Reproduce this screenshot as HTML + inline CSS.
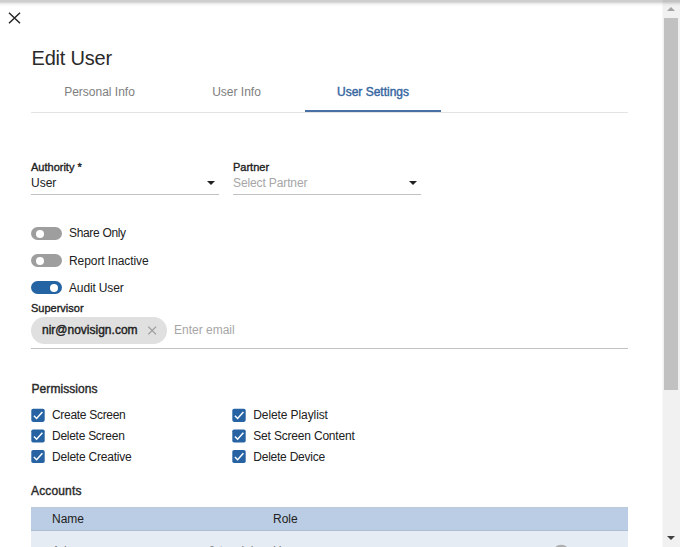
<!DOCTYPE html>
<html><head><meta charset="utf-8">
<style>
html,body{margin:0;padding:0;}
body{width:680px;height:547px;overflow:hidden;background:#fff;position:relative;font-family:"Liberation Sans",sans-serif;color:#212121;}
.abs{position:absolute;}
.topshadow{left:0;top:0;width:680px;height:7px;background:linear-gradient(to bottom,rgba(0,0,0,0.19) 0,rgba(0,0,0,0.195) 1.6px,rgba(0,0,0,0.11) 3px,rgba(0,0,0,0.04) 4.5px,rgba(0,0,0,0) 6.5px);}
.sb{left:662px;top:0;width:18px;height:547px;background:linear-gradient(to right,#f8f8f8 0,#f8f8f8 1px,#f1f1f1 1px);}
.thumb{left:664px;top:18px;width:14px;height:371.6px;background:#c1c1c1;}
h1{margin:0;font-weight:400;font-size:20px;left:31.5px;top:46px;line-height:24px;color:#2a2a2a;letter-spacing:-0.2px;}
.tab{top:84px;height:16px;line-height:16px;font-size:12px;color:#7e7e7e;text-align:center;}
.lbl{font-size:11px;color:#212121;line-height:12px;-webkit-text-stroke:0.35px #212121;}
.val{font-size:12px;line-height:14px;color:#212121;}
.ph{color:#a6a6a6;}
.line{height:1px;background:#c2c2c2;}
.tog{width:31px;height:13px;border-radius:7px;background:#9e9e9e;}
.tog i{position:absolute;top:2.5px;left:4.5px;width:8px;height:8px;border-radius:50%;background:#fff;}
.tog.on{background:#2464a3;}
.tog.on i{left:19px;}
.tl{font-size:12px;line-height:14px;color:#212121;}
.cb{width:13px;height:13px;border-radius:2px;background:#2464a3;}
.sec{font-size:12px;line-height:14px;color:#2a2a2a;-webkit-text-stroke:0.4px #2a2a2a;}
</style></head><body>
<svg class="abs" style="left:8px;top:12px" width="13" height="12" viewBox="0 0 13 12"><path d="M1 0.8 L12 11.2 M12 0.8 L1 11.2" stroke="#262626" stroke-width="1.5" fill="none"/></svg>
<h1 class="abs">Edit User</h1>

<div class="abs tab" style="left:31px;width:137px;">Personal Info</div>
<div class="abs tab" style="left:168px;width:137px;">User Info</div>
<div class="abs tab" style="left:305px;width:136px;color:#35669f;font-size:12px;-webkit-text-stroke:0.4px #35669f">User Settings</div>
<div class="abs" style="left:31px;top:112px;width:597px;height:1px;background:#e4e4e4"></div>
<div class="abs" style="left:305px;top:110px;width:136px;height:2px;background:#4a6fa5"></div>

<div class="abs lbl" style="left:31px;top:161px">Authority *</div>
<div class="abs val" style="left:31px;top:176px">User</div>
<div class="abs" style="left:207px;top:180.5px;width:0;height:0;border-left:4px solid transparent;border-right:4px solid transparent;border-top:4px solid #212121"></div>
<div class="abs line" style="left:31px;top:194px;width:188px"></div>

<div class="abs lbl" style="left:233px;top:161px">Partner</div>
<div class="abs val ph" style="left:233px;top:176px;letter-spacing:-0.12px">Select Partner</div>
<div class="abs" style="left:408.5px;top:180.5px;width:0;height:0;border-left:4px solid transparent;border-right:4px solid transparent;border-top:4px solid #212121"></div>
<div class="abs line" style="left:233px;top:194px;width:188px"></div>

<div class="abs tog" style="left:31px;top:227px"><i></i></div>
<div class="abs tl" style="left:69px;top:226px;letter-spacing:-0.33px">Share Only</div>
<div class="abs tog" style="left:31px;top:254px"><i></i></div>
<div class="abs tl" style="left:69px;top:254px;letter-spacing:-0.07px">Report Inactive</div>
<div class="abs tog on" style="left:31px;top:281px"><i></i></div>
<div class="abs tl" style="left:69px;top:281px;letter-spacing:-0.15px">Audit User</div>

<div class="abs lbl" style="left:31px;top:302px">Supervisor</div>
<div class="abs" style="left:31px;top:317px;width:136px;height:27px;border-radius:14px;background:#e0e0e0"></div>
<div class="abs" style="left:42px;top:323px;font-size:12px;line-height:14px;color:#212121;-webkit-text-stroke:0.4px #212121">nir@novisign.com</div>
<svg class="abs" style="left:147px;top:326px" width="10" height="10" viewBox="0 0 10 10"><path d="M1.3 0.6 L9 8.3 M9 0.6 L1.3 8.3" stroke="#999" stroke-width="1.2" fill="none"/></svg>
<div class="abs val ph" style="left:174px;top:323px">Enter email</div>
<div class="abs line" style="left:31px;top:348px;width:597px"></div>

<div class="abs sec" style="left:31.5px;top:382px;letter-spacing:0.07px">Permissions</div>
<svg class="abs" style="left:31px;top:408px" width="15" height="15" viewBox="0 0 15 15"><rect x="0.3" y="0.7" width="13.4" height="13.2" rx="1.8" fill="#2763a3"/><path d="M2.9 7.7 L5.6 10.5 L11.4 4.0" stroke="#fff" stroke-width="1.5" fill="none"/></svg>
<div class="abs tl" style="left:52px;top:408px;letter-spacing:-0.3px">Create Screen</div>
<svg class="abs" style="left:31px;top:429px" width="15" height="15" viewBox="0 0 15 15"><rect x="0.3" y="0.4" width="13.4" height="13.2" rx="1.8" fill="#2763a3"/><path d="M2.9 7.4 L5.6 10.2 L11.4 3.7" stroke="#fff" stroke-width="1.5" fill="none"/></svg>
<div class="abs tl" style="left:52px;top:429px;letter-spacing:-0.27px">Delete Screen</div>
<svg class="abs" style="left:31px;top:449px" width="15" height="15" viewBox="0 0 15 15"><rect x="0.3" y="0.9" width="13.4" height="13.2" rx="1.8" fill="#2763a3"/><path d="M2.9 7.9 L5.6 10.7 L11.4 4.2" stroke="#fff" stroke-width="1.5" fill="none"/></svg>
<div class="abs tl" style="left:52px;top:450px;letter-spacing:-0.21px">Delete Creative</div>
<svg class="abs" style="left:232.4px;top:408px" width="15" height="15" viewBox="0 0 15 15"><rect x="0.3" y="0.7" width="13.4" height="13.2" rx="1.8" fill="#2763a3"/><path d="M2.9 7.7 L5.6 10.5 L11.4 4.0" stroke="#fff" stroke-width="1.5" fill="none"/></svg>
<div class="abs tl" style="left:253.3px;top:408px;letter-spacing:-0.1px">Delete Playlist</div>
<svg class="abs" style="left:232.4px;top:429px" width="15" height="15" viewBox="0 0 15 15"><rect x="0.3" y="0.4" width="13.4" height="13.2" rx="1.8" fill="#2763a3"/><path d="M2.9 7.4 L5.6 10.2 L11.4 3.7" stroke="#fff" stroke-width="1.5" fill="none"/></svg>
<div class="abs tl" style="left:253.3px;top:429px;letter-spacing:-0.19px">Set Screen Content</div>
<svg class="abs" style="left:232.4px;top:449px" width="15" height="15" viewBox="0 0 15 15"><rect x="0.3" y="0.9" width="13.4" height="13.2" rx="1.8" fill="#2763a3"/><path d="M2.9 7.9 L5.6 10.7 L11.4 4.2" stroke="#fff" stroke-width="1.5" fill="none"/></svg>
<div class="abs tl" style="left:253.3px;top:450px;letter-spacing:-0.24px">Delete Device</div>
<div class="abs sec" style="left:31px;top:484px;letter-spacing:0.15px">Accounts</div>

<div class="abs" style="left:31px;top:507px;width:597px;height:24px;background:#bbcde4;box-sizing:border-box;border-top:1px solid #bccad9;border-bottom:1px solid #adbfd4"></div>
<div class="abs val" style="left:52px;top:512px">Name</div>
<div class="abs val" style="left:273px;top:512px">Role</div>
<div class="abs" style="left:31px;top:531px;width:597px;height:16px;background:#e6ecf4"></div>
<div class="abs val" style="left:52px;top:544px;color:#777">Ad agency screens area one &amp; two lab</div>
<div class="abs val" style="left:273px;top:544px;color:#777">User</div>
<svg class="abs" style="left:550px;top:540px" width="24" height="7" viewBox="0 0 24 7"><circle cx="11.2" cy="13.7" r="9" fill="#adadad"/></svg>

<div class="abs sb"></div>
<div class="abs thumb"></div>
<div class="abs" style="left:667px;top:7px;width:0;height:0;border-left:4px solid transparent;border-right:4px solid transparent;border-bottom:4px solid #a3a3a3"></div>
<div class="abs" style="left:667px;top:536px;width:0;height:0;border-left:4px solid transparent;border-right:4px solid transparent;border-top:4px solid #404040"></div>
<div class="abs topshadow"></div>
</body></html>
